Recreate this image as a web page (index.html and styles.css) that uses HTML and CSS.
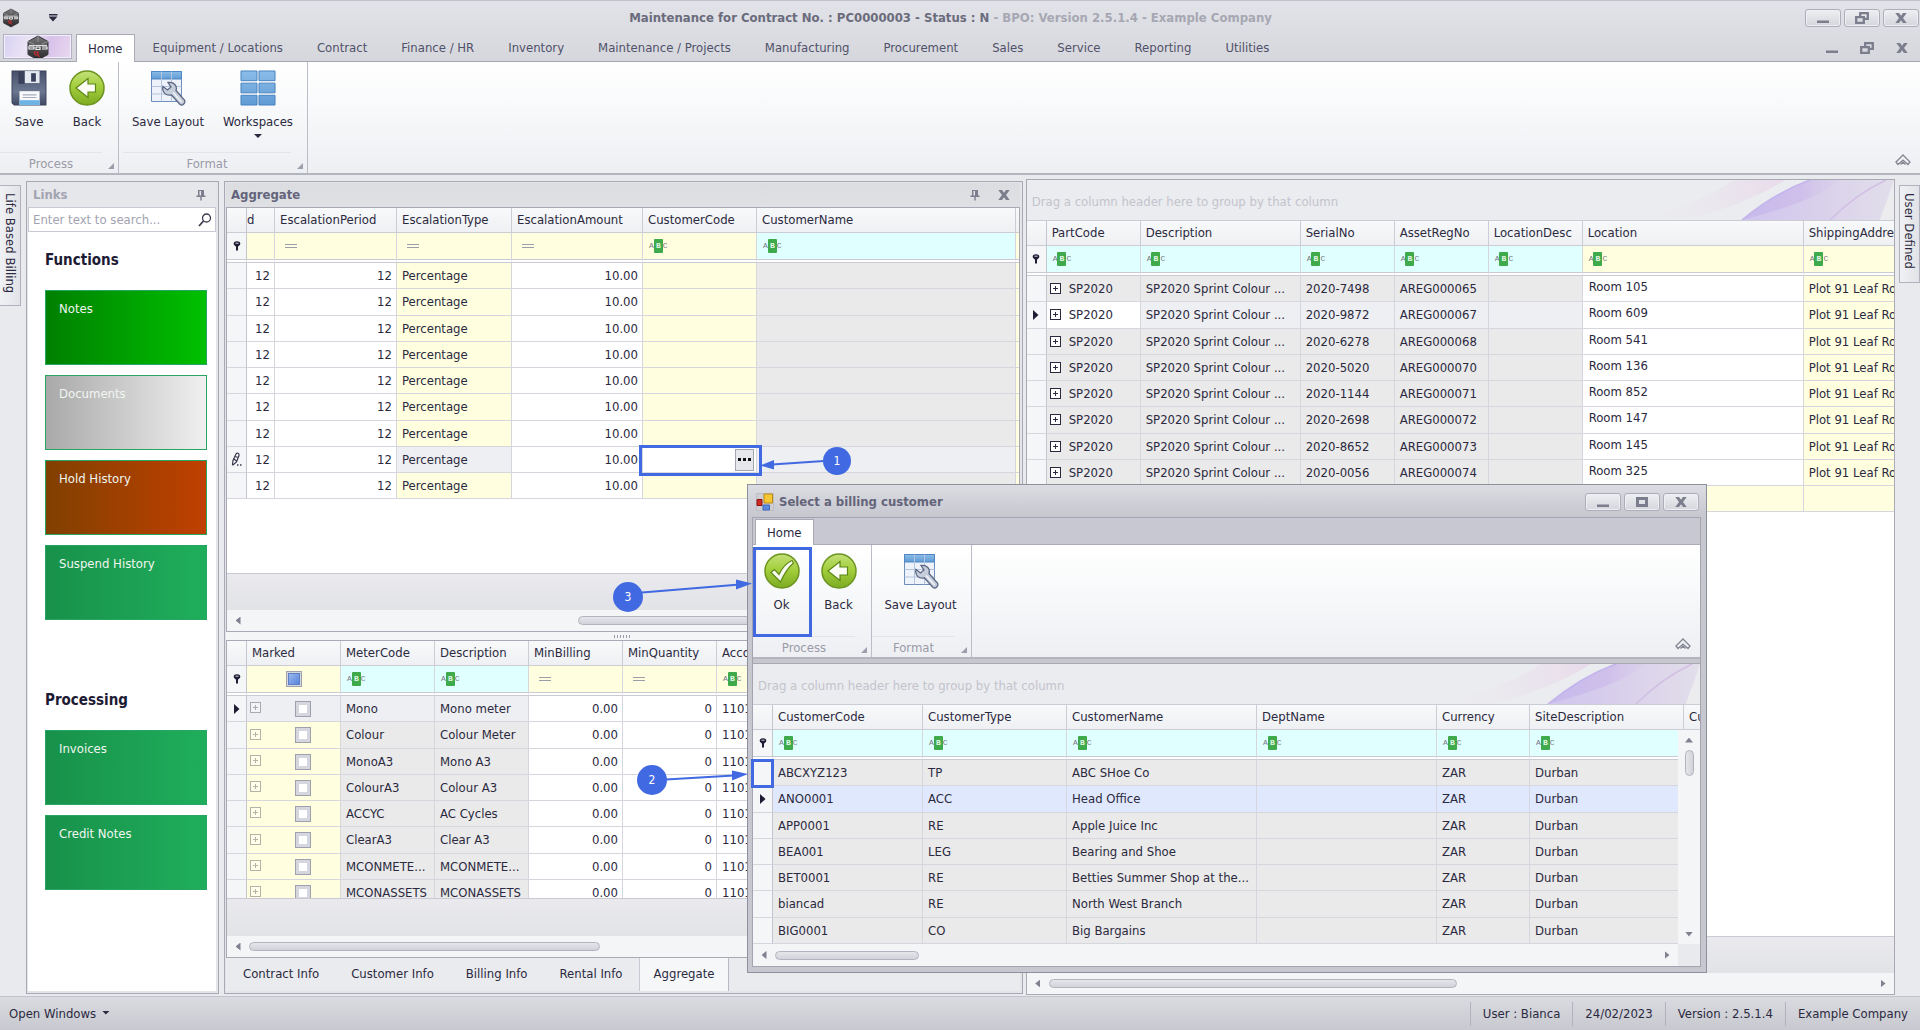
FILE: index.html
```html
<!DOCTYPE html>
<html lang="en">
<head>
<meta charset="utf-8">
<title>Maintenance for Contract No. : PC0000003</title>
<link rel="stylesheet" href="styles.css">
</head>
<body>
<svg class="defs" width="0" height="0" aria-hidden="true">
  <defs>
    <linearGradient id="gGreen" x1="0" y1="0" x2="0" y2="1"><stop offset="0" stop-color="#c3e07a"/><stop offset=".45" stop-color="#a4cf3c"/><stop offset="1" stop-color="#7cab22"/></linearGradient>
    <linearGradient id="gBlue" x1="0" y1="0" x2="0" y2="1"><stop offset="0" stop-color="#8cbce8"/><stop offset="1" stop-color="#5f9bd4"/></linearGradient>
    <linearGradient id="gDisk" x1="0" y1="0" x2="0" y2="1"><stop offset="0" stop-color="#47506b"/><stop offset=".6" stop-color="#6b7691"/><stop offset="1" stop-color="#414a63"/></linearGradient>
    <linearGradient id="gHex" x1="0" y1="0" x2="0" y2="1"><stop offset="0" stop-color="#77777a"/><stop offset="1" stop-color="#252528"/></linearGradient>
    <linearGradient id="gPurple" x1="0" y1="0" x2="1" y2="0"><stop offset="0" stop-color="#d0c6ef"/><stop offset=".35" stop-color="#d6ccec"/><stop offset="1" stop-color="#e2deea"/></linearGradient>
    <linearGradient id="gPink" x1="0" y1="0" x2="1" y2="0"><stop offset="0" stop-color="#ebebee" stop-opacity="0"/><stop offset="1" stop-color="#e8d6ea"/></linearGradient>
    <linearGradient id="gStreak" x1="0" y1="0" x2="1" y2="0"><stop offset="0" stop-color="#b9a8ea"/><stop offset=".6" stop-color="#c2abe8"/><stop offset="1" stop-color="#d2c2ea" stop-opacity=".3"/></linearGradient>
    <symbol id="hex" viewBox="0 0 24 26"><path d="M12 1 22 6.500V19.500L12 25 2 19.500V6.500Z" fill="url(#gHex)" stroke="#3a3a3d"/><path d="M12 1V7M2 6.500 8 9M22 6.500 16 9" stroke="#9a9a9d" stroke-width=".8"/><path d="M3 10.500H21" stroke="#d9d9dc" stroke-width="1.200"/><path d="M3 11V14H8V12H4M10 12H14V14.500H10V12M16 12H21V14H16" fill="none" stroke="#f2f2f4" stroke-width="1.200"/><path d="M8 17H12M12 16.500V20H9.500L8 17.500M12 20 13.500 22" fill="none" stroke="#d12b2b" stroke-width="1.200"/></symbol>
    <symbol id="back" viewBox="0 0 36 36"><circle cx="18" cy="18" r="17" fill="url(#gGreen)" stroke="#6c9420" stroke-width="1.500"/><path d="M7 18 19 8.500V14H26.500V22H19V27.500Z" fill="#fbfdf5" stroke="#5d8716" stroke-width="1.200"/></symbol>
    <symbol id="ok" viewBox="0 0 36 36"><circle cx="18" cy="18" r="17" fill="url(#gGreen)" stroke="#6c9420" stroke-width="1.500"/><path d="M7 19.500 10.500 16.500 15 21.500C18 15 22 10 28 7.500L29.500 10C24 14.500 20 21 16.500 29Z" fill="#f7faf0" stroke="#5d8716" stroke-width="1.200"/></symbol>
    <symbol id="save" viewBox="0 0 34 34"><path d="M1 1H33V33H3L1 31Z" fill="url(#gDisk)" stroke="#3a425a"/><path d="M7 1H27V13H7Z" fill="#39415a"/><path d="M13 1H27V12.500H13Z" fill="#e4e8f0"/><path d="M19 3H23.500V11H19Z" fill="#39415a"/><path d="M8 20H27V33H8Z" fill="#f7f9fc"/><path d="M8 28.500H27V33H8Z" fill="#6db3e6"/><path d="M11 23.500H24M11 26H24" stroke="#a7adba"/></symbol>
    <symbol id="layout" viewBox="0 0 36 36"><path d="M1.500 1.500H31.500V31.500H1.500Z" fill="#eef2fa" stroke="#6d8dbb"/><path d="M1.500 1.500H31.500V9H1.500Z" fill="url(#gBlue)" stroke="#4d86c2"/><path d="M11.500 1.500V31.500M21.500 1.500V31.500M1.500 16.500H31.500M1.500 24H31.500" stroke="#b4c4de"/><path d="M13 16.500 17.500 20 21 17 18 12.500C24 11.500 27.500 16 26 20.500L34.500 30C36 33 32.500 36 30 34.500L21.500 25C16 26 11.500 22.500 13 16.500Z" fill="#c6cedb" stroke="#5b6682" stroke-width="1.300"/><path d="M23 22.500 31.500 32" stroke="#f1f4f8" stroke-width="1.500"/></symbol>
    <symbol id="grid6" viewBox="0 0 37 37"><g fill="url(#gBlue)" stroke="#4683bf"><path d="M1 1H17.500V11H1ZM19.500 1H36V11H19.500ZM1 13.500H17.500V23.500H1ZM19.500 13.500H36V23.500H19.500ZM1 26H17.500V36H1ZM19.500 26H36V36H19.500Z"/></g></symbol>
    <symbol id="pin" viewBox="0 0 10 12"><path d="M2 1H8V6.500H9.500V8H.500V6.500H2ZM4.300 8H5.700V11.500H4.300Z" fill="#7c7d8d"/><path d="M3.500 2H5V6.500H3.500Z" fill="#e6e7eb"/></symbol>
    <symbol id="x" viewBox="0 0 12 10"><path d="M.300 0H4L6 2.800 8 0H11.700L8 5 11.700 10H8L6 7.200 4 10H.300L4 5Z" fill="#7c7d8d"/></symbol>
    <symbol id="min" viewBox="0 0 12 12"><path d="M0 8.500H12V11H0Z" fill="#7c7d8d"/></symbol>
    <symbol id="rest" viewBox="0 0 14 12"><path d="M5.200 4V1.200H12.800V6.800H9.500M1.200 5.200H8.800V10.800H1.200Z" fill="none" stroke="#7c7d8d" stroke-width="2.300"/></symbol>
    <symbol id="max" viewBox="0 0 12 10"><path d="M1.500 1.500H10.500V8.500H1.500Z" fill="none" stroke="#7c7d8d" stroke-width="3"/></symbol>
    <symbol id="chev" viewBox="0 0 16 12"><path d="M1 8 8 1 15 8 13 10.500 8 6 3 10.500ZM5.500 10.500 8 8.200 10.500 10.500" fill="none" stroke="#858693" stroke-width="1.300"/></symbol>
    <symbol id="filt" viewBox="0 0 8 10"><path d="M4 .300C6.500.300 7.500 1.500 7.300 3 7 4.600 5 5 5 6V9.500H3V6C3 5 1 4.600.700 3 .500 1.500 1.500.300 4 .300Z" fill="#1e1b33"/><path d="M2.500 2.200H5.500" stroke="#d8d8e0"/></symbol>
    <symbol id="cur" viewBox="0 0 6 10"><path d="M0 0 5.500 5 0 10Z" fill="#1e1b33"/></symbol>
    <symbol id="pencil" viewBox="0 0 11 15"><path d="M1.500 12.500 2 8.500 5 2C6 .500 8.500 1 8 3.500L5.500 10 2 13ZM4 4.500 7.300 5.500M3 7 5.500 9" fill="none" stroke="#3a384e" stroke-width="1.200"/><path d="M6 13H7.500M9 13H10.500" stroke="#3a384e" stroke-width="1.400"/></symbol>
    <symbol id="swoosh" viewBox="0 0 260 40"><path d="M0 40Q70 22 100 0H151Q110 26 50 40Z" fill="url(#gPink)" opacity=".8"/><path d="M108 40Q142 12 176 0H260L246 40Z" fill="url(#gPurple)"/><path d="M108 40Q142 12 176 0H205Q185 20 108 40Z" fill="url(#gStreak)" opacity=".4"/><path d="M108 40Q142 12 176 0" fill="none" stroke="#c3b4ec" stroke-width="1.500"/><path d="M196 40Q222 14 252 0" fill="none" stroke="#d2bfe4" stroke-width="1.500"/><path d="M246 40Q252 20 260 12V40Z" fill="#ececef"/></symbol>
  </defs>
</svg>

<div class="app">
  <header class="chrome">
    <div class="titlebar">
      <svg class="hex-s"><use href="#hex"/></svg>
      <button class="qat" aria-label="Quick access"><span></span></button>
      <h1 class="title">Maintenance for Contract No. : PC0000003 - Status : N <span>- BPO: Version 2.5.1.4 - Example Company</span></h1>
      <div class="caps">
        <button class="cap" aria-label="Minimize"><svg width="12" height="12"><use href="#min"/></svg></button>
        <button class="cap" aria-label="Restore"><svg width="14" height="12"><use href="#rest"/></svg></button>
        <button class="cap" aria-label="Close"><svg width="12" height="10"><use href="#x"/></svg></button>
      </div>
    </div>
    <nav class="tabs">
      <button class="appbtn" aria-label="Application menu"><svg width="24" height="26"><use href="#hex"/></svg></button>
      <a class="tab on" href="#">Home</a>
      <a class="tab" href="#">Equipment / Locations</a>
      <a class="tab" href="#">Contract</a>
      <a class="tab" href="#">Finance / HR</a>
      <a class="tab" href="#">Inventory</a>
      <a class="tab" href="#">Maintenance / Projects</a>
      <a class="tab" href="#">Manufacturing</a>
      <a class="tab" href="#">Procurement</a>
      <a class="tab" href="#">Sales</a>
      <a class="tab" href="#">Service</a>
      <a class="tab" href="#">Reporting</a>
      <a class="tab" href="#">Utilities</a>
      <div class="mdi">
        <button aria-label="Minimize child"><svg width="12" height="12"><use href="#min"/></svg></button>
        <button aria-label="Restore child"><svg width="14" height="12"><use href="#rest"/></svg></button>
        <button aria-label="Close child"><svg width="12" height="10"><use href="#x"/></svg></button>
      </div>
    </nav>
  </header>

  <section class="ribbon">
    <div class="rgroup g-process">
      <div class="rbtns">
        <button class="rbtn"><svg><use href="#save"/></svg>Save</button>
        <button class="rbtn"><svg><use href="#back"/></svg>Back</button>
      </div>
      <div class="rlabel">Process</div>
    </div>
    <div class="rgroup g-format">
      <div class="rbtns">
        <button class="rbtn wide"><svg><use href="#layout"/></svg>Save Layout</button>
        <button class="rbtn wide"><svg><use href="#grid6"/></svg>Workspaces<span class="drop"></span></button>
      </div>
      <div class="rlabel">Format</div>
    </div>
    <button class="collapse" aria-label="Collapse ribbon"><svg width="16" height="12"><use href="#chev"/></svg></button>
  </section>

  <main class="work">
    <div class="rail left"><button class="vtab">Life Based Billing</button></div>

    <aside class="panel links">
      <div class="phead dim"><h2>Links</h2><button aria-label="Pin"><svg width="10" height="12"><use href="#pin"/></svg></button></div>
      <label class="search"><input type="text" placeholder="Enter text to search..." aria-label="Search links"><svg width="14" height="14" viewBox="0 0 14 14"><circle cx="8.500" cy="5" r="4" fill="none" stroke="#3c3a4c" stroke-width="1.300"/><path d="M5.500 8 1 13" stroke="#3c3a4c" stroke-width="1.800"/></svg></label>
      <div class="tiles">
        <h3>Functions</h3>
        <button class="tile notes">Notes</button>
        <button class="tile docs">Documents</button>
        <button class="tile hold">Hold History</button>
        <button class="tile">Suspend History</button>
        <h3 class="second">Processing</h3>
        <button class="tile">Invoices</button>
        <button class="tile">Credit Notes</button>
      </div>
    </aside>

    <section class="panel aggregate">
      <div class="phead"><h2>Aggregate</h2><button aria-label="Pin"><svg width="10" height="12"><use href="#pin"/></svg></button><button aria-label="Close"><svg width="12" height="10"><use href="#x"/></svg></button></div>
      <div class="gridbox top">
        <div class="rows">
        <table class="t-agg">
          <thead>
            <tr><th></th><th class="cut">d</th><th>EscalationPeriod</th><th>EscalationType</th><th>EscalationAmount</th><th>CustomerCode</th><th>CustomerName</th><th></th></tr>
            <tr class="f"><td><svg><use href="#filt"/></svg></td><td class="y"></td><td class="y"><button class="eq" aria-label="Equals"></button></td><td class="y"><button class="eq" aria-label="Equals"></button></td><td class="y"><button class="eq" aria-label="Equals"></button></td><td class="y"><button class="abc">A<b>B</b>C</button></td><td class="c"><button class="abc">A<b>B</b>C</button></td><td class="y"></td></tr>
          </thead>
          <tbody>
            <tr><td></td><td>12</td><td>12</td><td>Percentage</td><td>10.00</td><td></td><td></td><td></td></tr>
            <tr><td></td><td>12</td><td>12</td><td>Percentage</td><td>10.00</td><td></td><td></td><td></td></tr>
            <tr><td></td><td>12</td><td>12</td><td>Percentage</td><td>10.00</td><td></td><td></td><td></td></tr>
            <tr><td></td><td>12</td><td>12</td><td>Percentage</td><td>10.00</td><td></td><td></td><td></td></tr>
            <tr><td></td><td>12</td><td>12</td><td>Percentage</td><td>10.00</td><td></td><td></td><td></td></tr>
            <tr><td></td><td>12</td><td>12</td><td>Percentage</td><td>10.00</td><td></td><td></td><td></td></tr>
            <tr><td></td><td>12</td><td>12</td><td>Percentage</td><td>10.00</td><td></td><td></td><td></td></tr>
            <tr class="sel"><td><svg class="pen"><use href="#pencil"/></svg></td><td>12</td><td>12</td><td>Percentage</td><td>10.00</td><td class="edit"><div><input type="text" aria-label="CustomerCode"><button aria-label="Browse"><svg width="13" height="3" viewBox="0 0 13 3"><path d="M0 0H3V3H0ZM5 0H8V3H5ZM10 0H13V3H10Z" fill="#111"/></svg></button></div></td><td></td><td></td></tr>
            <tr><td></td><td>12</td><td>12</td><td>Percentage</td><td>10.00</td><td></td><td></td><td></td></tr>
          </tbody>
        </table>
        </div>
        <div class="band"></div>
        <div class="hs"><button class="al" aria-label="Scroll left"></button><div class="track"><div class="thumb th-top"></div></div><button class="ar" aria-label="Scroll right"></button></div>
      </div>
      <div class="splitter"><span></span></div>
      <div class="gridbox bottom">
        <div class="rows">
        <table class="t-met">
          <thead>
            <tr><th></th><th>Marked</th><th>MeterCode</th><th>Description</th><th>MinBilling</th><th>MinQuantity</th><th>AccountCode</th></tr>
            <tr class="f"><td><svg><use href="#filt"/></svg></td><td class="y mk"><input type="checkbox" class="mixed" aria-label="Filter marked"></td><td class="c"><button class="abc">A<b>B</b>C</button></td><td class="c"><button class="abc">A<b>B</b>C</button></td><td class="y"><button class="eq" aria-label="Equals"></button></td><td class="y"><button class="eq" aria-label="Equals"></button></td><td class="y"><button class="abc">A<b>B</b>C</button></td></tr>
          </thead>
          <tbody>
            <tr class="sel"><td><svg class="cu"><use href="#cur"/></svg></td><td><button class="exp" aria-label="Expand"></button><input type="checkbox" aria-label="Mark Mono"></td><td>Mono</td><td>Mono meter</td><td>0.00</td><td>0</td><td>1101000</td></tr>
            <tr><td></td><td><button class="exp" aria-label="Expand"></button><input type="checkbox" aria-label="Mark Colour"></td><td>Colour</td><td>Colour Meter</td><td>0.00</td><td>0</td><td>1101000</td></tr>
            <tr><td></td><td><button class="exp" aria-label="Expand"></button><input type="checkbox" aria-label="Mark MonoA3"></td><td>MonoA3</td><td>Mono A3</td><td>0.00</td><td>0</td><td>1101000</td></tr>
            <tr><td></td><td><button class="exp" aria-label="Expand"></button><input type="checkbox" aria-label="Mark ColourA3"></td><td>ColourA3</td><td>Colour A3</td><td>0.00</td><td>0</td><td>1101000</td></tr>
            <tr><td></td><td><button class="exp" aria-label="Expand"></button><input type="checkbox" aria-label="Mark ACCYC"></td><td>ACCYC</td><td>AC Cycles</td><td>0.00</td><td>0</td><td>1101000</td></tr>
            <tr><td></td><td><button class="exp" aria-label="Expand"></button><input type="checkbox" aria-label="Mark ClearA3"></td><td>ClearA3</td><td>Clear A3</td><td>0.00</td><td>0</td><td>1101000</td></tr>
            <tr><td></td><td><button class="exp" aria-label="Expand"></button><input type="checkbox" aria-label="Mark MCONMETE"></td><td>MCONMETE...</td><td>MCONMETE...</td><td>0.00</td><td>0</td><td>1101000</td></tr>
            <tr><td></td><td><button class="exp" aria-label="Expand"></button><input type="checkbox" aria-label="Mark MCONASSETS"></td><td>MCONASSETS</td><td>MCONASSETS</td><td>0.00</td><td>0</td><td>1101000</td></tr>
          </tbody>
        </table>
        </div>
        <div class="band"></div>
        <div class="hs"><button class="al" aria-label="Scroll left"></button><div class="track"><div class="thumb th-met"></div></div><button class="ar" aria-label="Scroll right"></button></div>
      </div>
      <nav class="btabs">
        <a href="#">Contract Info</a><a href="#">Customer Info</a><a href="#">Billing Info</a><a href="#">Rental Info</a><a href="#" class="on">Aggregate</a>
      </nav>
    </section>

    <section class="assets gridbox">
      <div class="group"><span>Drag a column header here to group by that column</span><svg><use href="#swoosh"/></svg></div>
      <div class="rows">
      <table class="t-ast">
        <thead>
          <tr><th></th><th>PartCode</th><th>Description</th><th>SerialNo</th><th>AssetRegNo</th><th>LocationDesc</th><th>Location</th><th>ShippingAddress</th></tr>
          <tr class="f"><td><svg><use href="#filt"/></svg></td><td class="c"><button class="abc">A<b>B</b>C</button></td><td class="c"><button class="abc">A<b>B</b>C</button></td><td class="c"><button class="abc">A<b>B</b>C</button></td><td class="c"><button class="abc">A<b>B</b>C</button></td><td class="c"><button class="abc">A<b>B</b>C</button></td><td class="y"><button class="abc">A<b>B</b>C</button></td><td class="y"><button class="abc">A<b>B</b>C</button></td></tr>
        </thead>
        <tbody>
          <tr><td></td><td><button class="exp" aria-label="Expand"></button>SP2020</td><td>SP2020 Sprint Colour ...</td><td>2020-7498</td><td>AREG000065</td><td></td><td>Room 105</td><td>Plot 91 Leaf Road</td></tr>
          <tr class="sel"><td><svg class="cu"><use href="#cur"/></svg></td><td><button class="exp" aria-label="Expand"></button>SP2020</td><td>SP2020 Sprint Colour ...</td><td>2020-9872</td><td>AREG000067</td><td></td><td>Room 609</td><td>Plot 91 Leaf Road</td></tr>
          <tr><td></td><td><button class="exp" aria-label="Expand"></button>SP2020</td><td>SP2020 Sprint Colour ...</td><td>2020-6278</td><td>AREG000068</td><td></td><td>Room 541</td><td>Plot 91 Leaf Road</td></tr>
          <tr><td></td><td><button class="exp" aria-label="Expand"></button>SP2020</td><td>SP2020 Sprint Colour ...</td><td>2020-5020</td><td>AREG000070</td><td></td><td>Room 136</td><td>Plot 91 Leaf Road</td></tr>
          <tr><td></td><td><button class="exp" aria-label="Expand"></button>SP2020</td><td>SP2020 Sprint Colour ...</td><td>2020-1144</td><td>AREG000071</td><td></td><td>Room 852</td><td>Plot 91 Leaf Road</td></tr>
          <tr><td></td><td><button class="exp" aria-label="Expand"></button>SP2020</td><td>SP2020 Sprint Colour ...</td><td>2020-2698</td><td>AREG000072</td><td></td><td>Room 147</td><td>Plot 91 Leaf Road</td></tr>
          <tr><td></td><td><button class="exp" aria-label="Expand"></button>SP2020</td><td>SP2020 Sprint Colour ...</td><td>2020-8652</td><td>AREG000073</td><td></td><td>Room 145</td><td>Plot 91 Leaf Road</td></tr>
          <tr><td></td><td><button class="exp" aria-label="Expand"></button>SP2020</td><td>SP2020 Sprint Colour ...</td><td>2020-0056</td><td>AREG000074</td><td></td><td>Room 325</td><td>Plot 91 Leaf Road</td></tr>
          <tr class="new"><td></td><td></td><td></td><td></td><td></td><td></td><td></td><td></td></tr>
        </tbody>
      </table>
      </div>
      <div class="band"></div>
      <div class="hs"><button class="al" aria-label="Scroll left"></button><div class="track"><div class="thumb th-ast"></div></div><button class="ar" aria-label="Scroll right"></button></div>
    </section>

    <div class="rail right"><button class="vtab">User Defined</button></div>
  </main>

  <footer class="status">
    <button class="open">Open Windows <span class="drop"></span></button>
    <div class="sinfo"><span>User : Bianca</span><span>24/02/2023</span><span>Version : 2.5.1.4</span><span>Example Company</span></div>
  </footer>

  <div class="dialog" role="dialog" aria-label="Select a billing customer">
    <div class="dtitle">
      <svg width="18" height="18" viewBox="0 0 18 18"><path d="M.500.500H17.500V17.500H.500Z" fill="#cfcfd3" stroke="#bdbdc3"/><path d="M8 1H16.500V10H8Z" fill="#f6c634" stroke="#b88a12"/><path d="M1 6.500H6V12.500H1Z" fill="#d02a22" stroke="#8e1510"/><path d="M7 12H13.500V17H7Z" fill="#5d8be0" stroke="#3c66b8"/></svg>
      <h2>Select a billing customer</h2>
      <div class="caps">
        <button class="cap" aria-label="Minimize"><svg width="12" height="12"><use href="#min"/></svg></button>
        <button class="cap" aria-label="Maximize"><svg width="12" height="10"><use href="#max"/></svg></button>
        <button class="cap" aria-label="Close"><svg width="12" height="10"><use href="#x"/></svg></button>
      </div>
    </div>
    <div class="dbody">
      <nav class="dtabs"><a class="tab on" href="#">Home</a></nav>
      <section class="ribbon">
        <div class="rgroup g-process">
          <div class="rbtns">
            <button class="rbtn"><svg><use href="#ok"/></svg>Ok</button>
            <button class="rbtn"><svg><use href="#back"/></svg>Back</button>
          </div>
          <div class="rlabel">Process</div>
        </div>
        <div class="rgroup g-dformat">
          <div class="rbtns"><button class="rbtn wide"><svg><use href="#layout"/></svg>Save Layout</button></div>
          <div class="rlabel">Format</div>
        </div>
        <button class="collapse" aria-label="Collapse ribbon"><svg width="16" height="12"><use href="#chev"/></svg></button>
      </section>
      <div class="dgrid gridbox">
        <div class="group"><span>Drag a column header here to group by that column</span><svg><use href="#swoosh"/></svg></div>
        <div class="rows">
        <table class="t-cus">
          <thead>
            <tr><th></th><th>CustomerCode</th><th>CustomerType</th><th>CustomerName</th><th>DeptName</th><th>Currency</th><th>SiteDescription</th><th class="last">Cu</th></tr>
            <tr class="f"><td><svg><use href="#filt"/></svg></td><td class="c"><button class="abc">A<b>B</b>C</button></td><td class="c"><button class="abc">A<b>B</b>C</button></td><td class="c"><button class="abc">A<b>B</b>C</button></td><td class="c"><button class="abc">A<b>B</b>C</button></td><td class="c"><button class="abc">A<b>B</b>C</button></td><td class="c"><button class="abc">A<b>B</b>C</button></td><td class="c"></td></tr>
          </thead>
          <tbody>
            <tr><td></td><td>ABCXYZ123</td><td>TP</td><td>ABC SHoe Co</td><td></td><td>ZAR</td><td>Durban</td><td></td></tr>
            <tr class="hot"><td><svg class="cu"><use href="#cur"/></svg></td><td>ANO0001</td><td>ACC</td><td>Head Office</td><td></td><td>ZAR</td><td>Durban</td><td></td></tr>
            <tr><td></td><td>APP0001</td><td>RE</td><td>Apple Juice Inc</td><td></td><td>ZAR</td><td>Durban</td><td></td></tr>
            <tr><td></td><td>BEA001</td><td>LEG</td><td>Bearing and Shoe</td><td></td><td>ZAR</td><td>Durban</td><td></td></tr>
            <tr><td></td><td>BET0001</td><td>RE</td><td>Betties Summer Shop at the...</td><td></td><td>ZAR</td><td>Durban</td><td></td></tr>
            <tr><td></td><td>biancad</td><td>RE</td><td>North West Branch</td><td></td><td>ZAR</td><td>Durban</td><td></td></tr>
            <tr><td></td><td>BIG0001</td><td>CO</td><td>Big Bargains</td><td></td><td>ZAR</td><td>Durban</td><td></td></tr>
          </tbody>
        </table>
        <div class="vs"><button class="au" aria-label="Scroll up"></button><div class="thumb"></div><button class="ad" aria-label="Scroll down"></button></div>
        </div>
        <div class="hs"><button class="al" aria-label="Scroll left"></button><div class="track"><div class="thumb th-cus"></div></div><button class="ar" aria-label="Scroll right"></button><i></i></div>
      </div>
    </div>
  </div>

  <svg class="callouts" width="900" height="800" viewBox="0 0 900 800">
    <g fill="none" stroke="#4169e1" stroke-width="3"><path d="M640.500 446.500H760.500V474.500H640.500Z"/><path d="M754.500 548.500H810.500V635.500H754.500Z"/><path d="M752.500 760.500H772.500V786.500H752.500Z"/></g>
    <g stroke="#4169e1" stroke-width="2"><path d="M824 461 772 464.500M642 592.500 740 584.500M666 779.500 734 775.500"/></g>
    <g fill="#4169e1"><path d="M760 465.500 774 460V469.500ZM752 583.500 736 579.500V589.500ZM748 774 732 770.500V780.500Z"/><circle cx="837" cy="461" r="14"/><circle cx="628" cy="597" r="15"/><circle cx="652" cy="780" r="15"/></g>
    <g class="num"><text x="837" y="465">1</text><text x="628" y="601">3</text><text x="652" y="784">2</text></g>
  </svg>
</div>
</body>
</html>
```
FILE: styles.css
```css
* { box-sizing: border-box; }
body {
  margin: 0;
  font: 13px/16px "DejaVu Sans Condensed", "DejaVu Sans", sans-serif;
  color: #2b2940;
  background: #e3e4e8;
}
button {
  font: inherit;
  color: inherit;
  border: 0;
  padding: 0;
  margin: 0;
  background: none;
}
a { color: inherit; text-decoration: none; }
h1, h2, h3 { margin: 0; font-size: 13px; font-weight: bold; }
svg { display: block; flex: none; }
.defs { position: absolute; }

.app {
  position: relative;
  display: flex;
  flex-direction: column;
  min-height: 100vh;
}

/* title bar and ribbon tabs */
.chrome {
  background: linear-gradient(#e2e3e8, #d6d7dc);
  border-top: 1px solid #c0c1c9;
  border-bottom: 1px solid #a3a5b1;
}
.titlebar { display: flex; align-items: center; height: 33px; padding: 0 1px 0 2px; }
.hex-s { width: 18px; height: 20px; }
.qat { width: 66px; display: flex; justify-content: center; }
.qat span {
  width: 9px;
  height: 8px;
  background: #2b2940;
  clip-path: polygon(0 0, 100% 0, 100% 2px, 0 2px, 0 3px, 100% 3px, 50% 100%, 0 3px);
}
.title { flex: 1; text-align: center; padding-left: 10px; color: #6a6b7c; }
.title span { color: #a6a7b3; }
.caps { display: flex; gap: 3px; }
.cap {
  width: 36px;
  height: 18px;
  display: grid;
  place-items: center;
  border: 1px solid #adaeb9;
  border-radius: 3px;
  background: linear-gradient(#eeeff2, #d5d6dc);
  box-shadow: inset 0 0 0 1px #eeeff3;
}
.tabs { display: flex; align-items: stretch; height: 27px; padding-left: 3px; }
.appbtn {
  width: 69px;
  height: 25px;
  display: grid;
  place-items: center;
  border: 1px solid #b3b2c4;
  box-shadow: inset 0 0 0 1px #f2effa;
  background: linear-gradient(110deg, #d8d0f2, #eae4f5 35%, #d8c2ea 65%, #ead8f0);
  margin-right: 4px;
  overflow: hidden;
}
.tab {
  display: flex;
  align-items: center;
  padding: 1px 17px 0;
  color: #50516a;
  white-space: nowrap;
}
.tab.on {
  padding: 1px 11px 0;
  margin: 0 1px -1px 0;
  border: 1px solid #a9aab6;
  border-bottom: 0;
  background: #fff;
  color: #2b2940;
}
.mdi { margin-left: auto; display: flex; gap: 22px; align-items: center; padding-right: 12px; }

.ribbon {
  display: flex;
  height: 113px;
  background: linear-gradient(#fff, #f9fafb 35%, #eeeff3);
  border-bottom: 2px solid #b4b6bf;
}
.rgroup {
  display: flex;
  flex-direction: column;
  border-right: 1px solid #bcbdc7;
}
.g-process { width: 119px; }
.g-format { width: 189px; padding-left: 4px; }
.rbtns { display: flex; flex: 1; }
.rbtn {
  width: 58px;
  display: flex;
  flex-direction: column;
  align-items: center;
  padding-top: 8px;
}
.rbtn svg { width: 36px; height: 36px; margin-bottom: 8px; }
.rbtn.wide { width: 90px; }
.drop {
  display: inline-block;
  width: 8px;
  height: 4px;
  margin-top: 4px;
  background: #2b2940;
  clip-path: polygon(0 0, 100% 0, 50% 100%);
}
.rlabel {
  position: relative;
  height: 21px;
  margin-right: 16px;
  line-height: 22px;
  text-align: center;
  color: #9a9ba8;
  border-top: 1px solid #e4e5ea;
}
.rlabel::after {
  content: "";
  position: absolute;
  right: -12px;
  bottom: 4px;
  width: 6px;
  height: 6px;
  background: #9d9eab;
  clip-path: polygon(100% 0, 100% 100%, 0 100%);
}
.collapse { margin: auto 9px 7px auto; }

/* work area */
.work {
  flex: 1;
  display: flex;
  padding: 4px 0 1px;
  background: #e9eaee;
  min-height: 0;
}
.rail { width: 25px; flex: none; padding-top: 6px; }
.rail.left { width: 26px; }
.vtab {
  writing-mode: vertical-rl;
  width: 21px;
  padding: 7px 0;
  height: 98px;
  line-height: 19px;
  text-align: left;
  border: 1px solid #b0b1bc;
  background: linear-gradient(90deg, #f0f1f4, #e2e3e8);
}
.left .vtab { height: 121px; border-left: 0; }
.rail.right { padding-left: 4px; }

.panel {
  display: flex;
  flex-direction: column;
  margin: 2px 0 1px;
  border: 1px solid #a8a9b5;
  padding: 1px 2px 2px 1px;
  background: #e4e5e9;
}
.links { width: 193px; flex: none; margin-right: 5px; }
.aggregate { flex: 797 1 0; min-width: 0; margin-right: 3px; }
.phead {
  height: 24px;
  flex: none;
  display: flex;
  align-items: center;
  padding: 0 10px 0 5px;
  background: linear-gradient(#dcdde1, #dfe0e4);
  color: #63647a;
}
.phead h2 { flex: 1; }
.phead button + button { margin-left: 18px; }
.phead.dim { color: #a3a4b2; background: #e6e7eb; }
.search {
  display: flex;
  align-items: center;
  height: 25px;
  padding: 0 3px 0 4px;
  background: #fff;
  border: 1px solid #c8c9d3;
}
.search input {
  flex: 1;
  min-width: 0;
  border: 0;
  padding: 0;
  outline: 0;
  background: none;
  font: inherit;
}
.search input::placeholder { color: #a2a3b0; opacity: 1; }
.tiles {
  flex: 1;
  background: #fff;
  padding: 18px 9px 0 17px;
  display: flex;
  flex-direction: column;
  gap: 10px;
}
.tiles h3 { font-size: 15px; line-height: 20px; margin-bottom: 10px; color: #1d1b33; }
.tiles .second { margin-top: 60px; }
.tile {
  height: 75px;
  flex: none;
  display: flex;
  padding: 10px 13px;
  color: #f1f6f0;
  border: 1px solid #27a562;
  background: linear-gradient(90deg, #18914a, #1fae5c);
}
.notes { background: linear-gradient(90deg, #008000, #00c000); }
.docs { background: linear-gradient(90deg, #a9a9a9, #f0f0f0); }
.hold { background: linear-gradient(90deg, #804000, #c04000); }

/* grids */
.gridbox { display: flex; flex-direction: column; min-width: 0; border: 1px solid #a8a9b5; background: #fff; }
.gridbox.top { height: 425px; flex: none; }
.gridbox.bottom { flex: 1; }
.gridbox.bottom .rows { height: 257px; flex: none; }
.gridbox.bottom .band { flex: 1; }
.rows { flex: 1; overflow: hidden; display: flex; align-items: flex-start; min-height: 0; }
.band { height: 37px; flex: none; border-top: 1px solid #c9cad3; background: linear-gradient(#eaeaee, #e2e3e7); }
.hs { height: 21px; flex: none; display: flex; align-items: center; background: #f4f5f7; }
.track { flex: 1; }
.thumb { height: 9px; border: 1px solid #b2b3bf; border-radius: 5px; background: linear-gradient(#e5e6ea, #d2d3da); }
.th-top { margin-left: 44%; width: 48%; }
.th-met { width: 351px; }
.th-ast { width: 408px; }
.th-cus { width: 144px; }
.al, .ar, .au, .ad { width: 22px; height: 20px; display: grid; place-items: center; }
.al::before, .ar::before, .au::before, .ad::before { content: ""; width: 5px; height: 8px; background: #7f8090; }
.al::before { clip-path: polygon(100% 0, 100% 100%, 0 50%); }
.ar::before { clip-path: polygon(0 0, 0 100%, 100% 50%); }
.au::before { width: 8px; height: 5px; clip-path: polygon(0 100%, 100% 100%, 50% 0); }
.ad::before { width: 8px; height: 5px; clip-path: polygon(0 0, 100% 0, 50% 100%); }
.splitter { height: 8px; flex: none; background: #f4f5f7; display: grid; place-items: center; }
.splitter span { width: 17px; height: 3px; background: repeating-linear-gradient(90deg, #9c9dab 0 1px, transparent 1px 3px); }

table { border-collapse: separate; border-spacing: 0; table-layout: fixed; width: 100%; flex: 1; min-width: 0; background: #fff; }
th, td { padding: 0 4px 0 5px; text-align: left; font-weight: normal; overflow: hidden; white-space: nowrap; line-height: 16px; border-right: 1px solid #d6d7de; border-bottom: 1px solid #d6d7de; }
th { height: 25px; background: linear-gradient(#f8f9fa, #eff0f3); border-color: #cbccd5; }
th.cut { padding-left: 0; }
tr.f td { height: 30px; border-bottom: 4px double #c9cad3; background-clip: padding-box; }
tbody td { height: 26px; }
tbody tr:nth-child(4n+2) td { height: 27px; }
td:first-child, th:first-child { width: 20px; padding: 0; background-color: #f5f6f8; border-right-color: #c4c5cf; }
td:last-child, th:last-child { border-right: 0; }
td:first-child svg { margin: 0 auto; width: 8px; height: 10px; }
td:first-child svg.cu { width: 6px; }
td:first-child svg.pen { width: 11px; height: 15px; }
.y { background-color: #ffffe0; }
.c { background-color: #e0ffff; }
.eq { display: block; width: 12px; height: 4px; margin-left: 5px; border-top: 1px solid #9c9daa; border-bottom: 1px solid #9c9daa; }
.abc { display: flex; align-items: center; font: 8px/14px "Liberation Mono", monospace; color: #777884; margin-left: 1px; }
.abc b { background: #3faa4c; color: #e4f7e4; width: 9px; height: 14px; border-radius: 1px; text-align: center; }

.exp {
  display: inline-block;
  vertical-align: middle;
  width: 11px;
  height: 11px;
  border: 1px solid #2b2940;
  margin: 0 8px 2px -2px;
  background: linear-gradient(#2b2940, #2b2940) 50% 50% / 5px 1px no-repeat, linear-gradient(#2b2940, #2b2940) 50% 50% / 1px 5px no-repeat, #fff;
}

input[type="checkbox"] { appearance: none; width: 16px; height: 16px; margin: 0; vertical-align: middle; border: 1px solid #9fa0ad; background: #fff; box-shadow: inset 0 0 0 3px #d6d7de; }
input.mixed { display: block; margin: 0 auto; background: linear-gradient(135deg, #a9c4f2, #4a78d8); box-shadow: inset 0 0 0 1px #d6d7de, inset 0 0 0 2px #5d7fc4; }

.t-agg th:nth-child(2) { width: 28px; }
.t-agg th:nth-child(3) { width: 122px; }
.t-agg th:nth-child(4) { width: 115px; }
.t-agg th:nth-child(5) { width: 131px; }
.t-agg th:nth-child(6) { width: 114px; }
.t-agg th:nth-child(8) { width: 3px; padding: 0; }
.t-agg td:nth-child(8) { padding: 0; }
.t-agg tbody td:nth-child(2), .t-agg tbody td:nth-child(3), .t-agg tbody td:nth-child(5) { text-align: right; }
.t-agg tbody td:nth-child(4), .t-agg tbody td:nth-child(6), .t-agg tbody td:nth-child(8) { background-color: #ffffe0; }
.t-agg tbody td:nth-child(7) { background-color: #eaeaea; }
.t-agg .sel td:nth-child(4), .t-agg .sel td:nth-child(7) { background-color: #eeeff2; }
.t-agg .sel td.edit { background-color: #fff; padding: 0 2px 0 4px; }
.edit div { display: flex; }
.edit input { flex: 1; min-width: 0; border: 0; padding: 0; outline: 0; background: none; }
.edit button { width: 19px; height: 22px; display: grid; place-items: center; border: 1px solid #a4a5b1; background: #e6e7eb; }

.t-met th:nth-child(2), .t-met th:nth-child(3), .t-met th:nth-child(4), .t-met th:nth-child(5), .t-met th:nth-child(6) { width: 94px; }
.t-met td:nth-child(2) { background-color: #ffffe0; }
.t-met tbody td:nth-child(3), .t-met tbody td:nth-child(4) { background-color: #eaeaea; padding-right: 0; }
.t-met tbody td:nth-child(5), .t-met tbody td:nth-child(6) { text-align: right; }
.t-met .sel td:nth-child(2), .t-met .sel td:nth-child(3), .t-met .sel td:nth-child(4) { background-color: #eeeff2; }
.t-met .exp { opacity: .35; margin-right: 34px; }

.assets { flex: 871 1 0; }
.group { height: 41px; flex: none; display: flex; align-items: center; justify-content: space-between; padding-left: 5px; background: #ebecef; color: #c3c3cd; border-bottom: 1px solid #cbccd5; }
.group span { padding-top: 3px; }
.group svg { width: 260px; height: 40px; }
.t-ast th:nth-child(2), .t-ast th:nth-child(4), .t-ast th:nth-child(5), .t-ast th:nth-child(6) { width: 94px; }
.t-ast th:nth-child(3) { width: 160px; }
.t-ast th:nth-child(7) { width: 221px; }
.t-ast tbody td { background-color: #eaeaea; }
.t-ast tbody .sel td { background-color: #eeeff2; }
.t-ast tbody td:first-child { background-color: #f5f6f8; }
.t-ast tbody td:nth-child(7), .t-ast tbody .sel td:nth-child(2) { background-color: #fff; }
.t-ast tbody td:nth-child(7) { vertical-align: top; padding: 3px 6px 0; }
.t-ast tbody td:nth-child(8), .t-ast tbody .new td { background-color: #ffffe0; }

.btabs { display: flex; height: 33px; padding-left: 1px; flex: none; background: #eaebef; }
.btabs a { padding: 8px 16px 0; }
.btabs .on { background: #f6f7f9; border-right: 1px solid #b8b9c4; border-left: 1px solid #c8c9d2; padding: 8px 14px 0; }

.status { display: flex; justify-content: space-between; align-items: center; height: 34px; padding: 0 0 0 9px; border-top: 1px solid #c2c3cb; background: linear-gradient(#dadbe0, #c8c9d0); }
.open .drop { margin: 0 0 3px 2px; }
.sinfo { display: flex; }
.sinfo span { padding: 4px 12px; border-left: 1px solid #b1b2bc; }

/* customer lookup window */
.dialog {
  position: absolute;
  left: 747px;
  top: 484px;
  width: 960px;
  height: 489px;
  display: flex;
  flex-direction: column;
  border: 1px solid #8f909e;
  background: #c6c7cf;
  padding: 0 5px 5px 4px;
}
.dtitle { height: 32px; flex: none; display: flex; align-items: center; gap: 5px; padding: 1px 7px 0 8px; margin: 0 -5px 0 -4px; background: linear-gradient(#dcdde2, #c6c7cf); }
.dtitle h2 { flex: 1; color: #63647a; }
.dbody { flex: 1; display: flex; flex-direction: column; min-height: 0; border: 1px solid #a3a4b0; }
.dtabs { display: flex; height: 27px; flex: none; padding: 1px 0 0 2px; border-bottom: 1px solid #a9aab6; background: #c8c8d2; }
.dbody .ribbon { flex: none; height: 114px; }
.dbody .rbtn { width: 57px; }
.dbody .rbtn.wide { width: 97px; }
.dbody .g-dformat { width: 100px; }
.dgrid { flex: 1; min-height: 0; margin-top: 4px; border-width: 1px 0 0; }
.dgrid .rows { position: relative; }
.t-cus th:nth-child(2) { width: 150px; }
.t-cus th:nth-child(3) { width: 144px; }
.t-cus th:nth-child(4) { width: 190px; }
.t-cus th:nth-child(5) { width: 180px; }
.t-cus th:nth-child(6) { width: 93px; }
.t-cus th:nth-child(7) { width: 154px; }
.t-cus tbody td { background-color: #eaeaea; }
.t-cus tbody .hot td { background-color: #e0e8fd; }
.t-cus tbody td:first-child { background-color: #f5f6f8; }
.vs { position: absolute; right: 0; top: 25px; bottom: 0; width: 22px; background: #f4f5f7; display: flex; flex-direction: column; align-items: center; }
.vs .thumb { width: 9px; height: 26px; background: linear-gradient(90deg, #e5e6ea, #d2d3da); }
.vs .ad { margin-top: auto; }
.dgrid .hs { height: 22px; }
.dgrid .hs i { width: 22px; height: 22px; background: #e9eaee; }

.callouts { position: absolute; left: 0; top: 0; pointer-events: none; }
.num { fill: #fff; font-size: 12px; text-anchor: middle; }
```
